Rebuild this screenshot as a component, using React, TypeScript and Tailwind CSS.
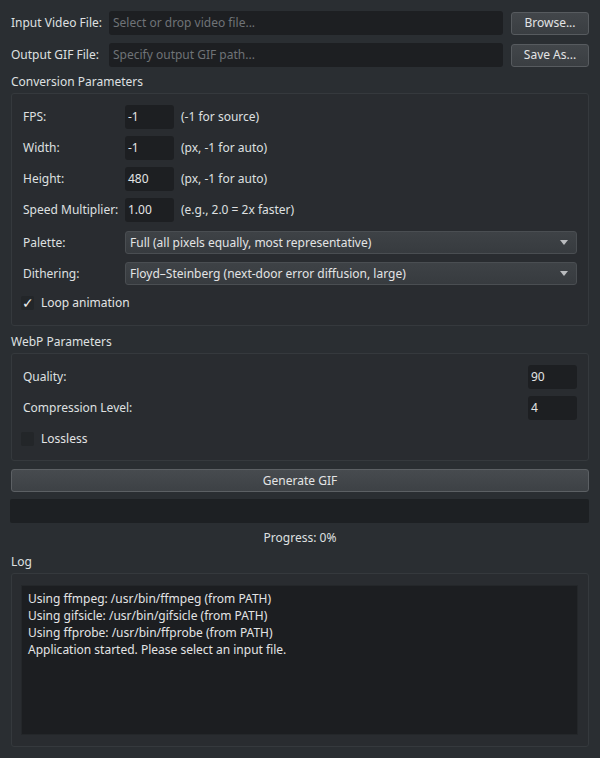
import React from "react";

const font = { fontFamily: '"Noto Sans", "Open Sans", sans-serif' };

function TextInput({ placeholder }: { placeholder: string }) {
  return (
    <div className="flex-1 h-[24px] bg-[#1d1f22] rounded-[3px] flex items-center px-[4px] text-[#6f7377] truncate">
      {placeholder}
    </div>
  );
}

function Btn({ children, w }: { children: React.ReactNode; w: string }) {
  return (
    <div
      className={`${w} h-[23px] flex items-center justify-center rounded-[3px] border border-[#575b5f] bg-gradient-to-b from-[#42464a] to-[#3a3e42] text-[#e3e4e5]`}
    >
      {children}
    </div>
  );
}

function Spin({ value }: { value: string }) {
  return (
    <div className="w-[49px] h-[24px] bg-[#1d1f22] rounded-[3px] flex items-center px-[3px] text-[#e3e4e5] shrink-0">
      {value}
    </div>
  );
}

function Combo({ value }: { value: string }) {
  return (
    <div className="flex-1 h-[23px] rounded-[3px] border border-[#4a4e52] bg-gradient-to-b from-[#3e4246] to-[#373b3f] flex items-center pl-[4px] pr-[8px] text-[#e3e4e5]">
      <span className="flex-1 truncate">{value}</span>
      <svg width="8" height="5" viewBox="0 0 8 5">
        <path d="M0 0 L8 0 L4 5 Z" fill="#b9bbbe" />
      </svg>
    </div>
  );
}

function Check({ checked, label }: { checked: boolean; label: string }) {
  return (
    <div className="h-[24px] flex items-center">
      <div className="w-[13px] h-[14px] ml-[9px] bg-[#232629] rounded-[2px] flex items-center justify-center text-[#eceded] text-[14px] leading-none">
        {checked ? "✓" : ""}
      </div>
      <span className="ml-[7px] text-[#e3e4e5]">{label}</span>
    </div>
  );
}

function ParamRow({ label, value, hint }: { label: string; value: string; hint: string }) {
  return (
    <div className="h-[24px] flex items-center">
      <span className="w-[102px] shrink-0">{label}</span>
      <Spin value={value} />
      <span className="ml-[7px]">{hint}</span>
    </div>
  );
}

export default function App() {
  return (
    <div
      style={font}
      className="w-[600px] h-[758px] bg-[#2a2e32] text-[#dfe0e1] text-[12px] leading-[16px] px-[11px] pt-[11px] flex flex-col overflow-hidden"
    >
      <div className="flex items-center h-[24px]">
        <span className="w-[98px] shrink-0">Input Video File:</span>
        <TextInput placeholder="Select or drop video file..." />
        <div className="ml-[8px]">
          <Btn w="w-[78px]">Browse...</Btn>
        </div>
      </div>
      <div className="flex items-center h-[24px] mt-[8px]">
        <span className="w-[98px] shrink-0">Output GIF File:</span>
        <TextInput placeholder="Specify output GIF path..." />
        <div className="ml-[8px]">
          <Btn w="w-[78px]">Save As...</Btn>
        </div>
      </div>

      <div className="mt-[7px] h-[16px]">Conversion Parameters</div>
      <div className="mt-[3px] border border-[#35393d] rounded-[3px] bg-[#292c30] pl-[11px] pr-[11px] pt-[11px] pb-[10px] flex flex-col">
        <div className="flex flex-col gap-[7px]">
          <ParamRow label="FPS:" value="-1" hint="(-1 for source)" />
          <ParamRow label="Width:" value="-1" hint="(px, -1 for auto)" />
          <ParamRow label="Height:" value="480" hint="(px, -1 for auto)" />
          <ParamRow label="Speed Multiplier:" value="1.00" hint="(e.g., 2.0 = 2x faster)" />
        </div>
        <div className="mt-[9px] h-[23px] flex items-center">
          <span className="w-[102px] shrink-0">Palette:</span>
          <Combo value="Full (all pixels equally, most representative)" />
        </div>
        <div className="mt-[8px] h-[23px] flex items-center">
          <span className="w-[102px] shrink-0">Dithering:</span>
          <Combo value="Floyd–Steinberg (next-door error diffusion, large)" />
        </div>
        <div className="mt-[6px] -ml-[11px]">
          <Check checked label="Loop animation" />
        </div>
      </div>

      <div className="mt-[8px] h-[16px]">WebP Parameters</div>
      <div className="mt-[3px] border border-[#35393d] rounded-[3px] bg-[#292c30] pl-[11px] pr-[11px] pt-[11px] pb-[9px] flex flex-col gap-[7px]">
        <div className="h-[24px] flex items-center">
          <span className="flex-1">Quality:</span>
          <Spin value="90" />
        </div>
        <div className="h-[24px] flex items-center">
          <span className="flex-1">Compression Level:</span>
          <Spin value="4" />
        </div>
        <div className="-ml-[11px]">
          <Check checked={false} label="Lossless" />
        </div>
      </div>

      <div className="mt-[8px] h-[23px] rounded-[3px] border border-[#5c6064] bg-gradient-to-b from-[#474b4f] to-[#3d4145] flex items-center justify-center text-[#e3e4e5]">
        Generate GIF
      </div>
      <div className="mt-[7px] -ml-[1px] h-[24px] bg-[#1d2023] rounded-[2px]" />
      <div className="mt-[7px] h-[16px] text-center">Progress: 0%</div>
      <div className="mt-[8px] h-[16px]">Log</div>
      <div className="mt-[3px] h-[174px] border border-[#35393d] rounded-[3px] bg-[#292c30] pl-[9px] pr-[10px] pt-[11px] pb-[11px] flex">
        <div className="flex-1 bg-[#1c1e21] border border-[#24272a] px-[6px] pt-[4px] leading-[17px] text-[#e3e4e5]">
          <div>Using ffmpeg: /usr/bin/ffmpeg (from PATH)</div>
          <div>Using gifsicle: /usr/bin/gifsicle (from PATH)</div>
          <div>Using ffprobe: /usr/bin/ffprobe (from PATH)</div>
          <div>Application started. Please select an input file.</div>
        </div>
      </div>
    </div>
  );
}
